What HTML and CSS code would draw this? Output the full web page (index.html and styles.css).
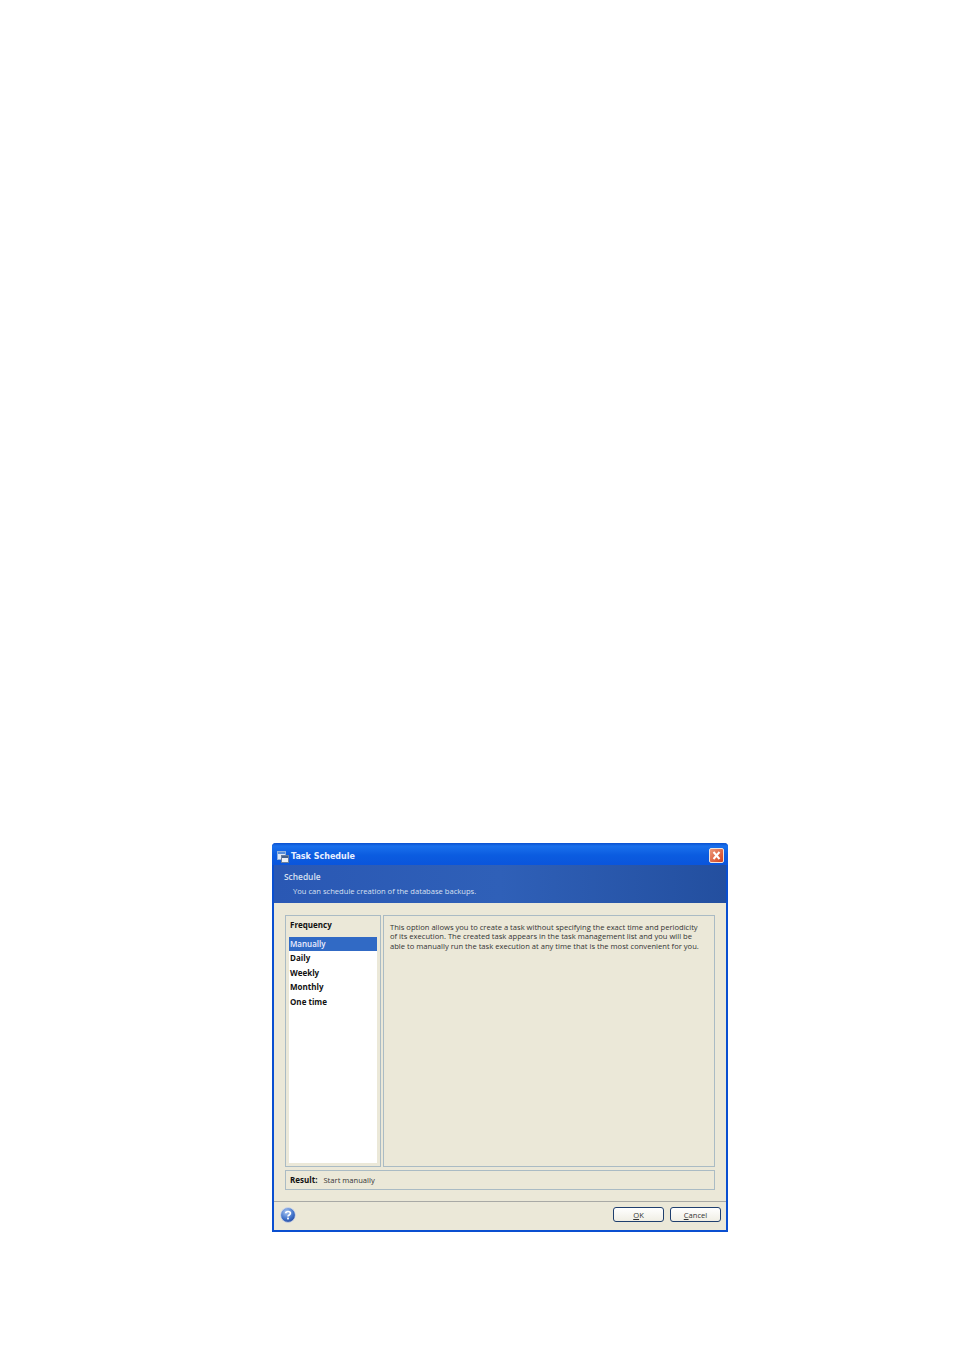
FILE: index.html
```html
<!DOCTYPE html>
<html lang="en">
<head>
    <meta charset="UTF-8">
    <title>Task Schedule</title>
    <link rel="stylesheet" href="styles.css">
</head>
<body>

<div class="window">
    <!-- Title bar -->
    <div class="titlebar">
        <svg class="app-icon" width="12" height="12" viewBox="0 0 12 12">
            <rect x="0.5" y="0.5" width="8" height="8" fill="#dfe9f7" stroke="#8fb0dc"/>
            <rect x="1" y="1" width="7" height="2" fill="#5a8fd8"/>
            <rect x="4.5" y="4.5" width="7" height="7" fill="#eef1f6" stroke="#6b7f9c"/>
            <rect x="5" y="5" width="6" height="2" fill="#44618c"/>
        </svg>
        <span class="title">Task Schedule</span>
        <div class="close">
            <svg width="13" height="13" viewBox="0 0 13 13">
                <path d="M3.5 3 L9.5 10 M9.5 3 L3.5 10" stroke="#fff" stroke-width="2"/>
            </svg>
        </div>
    </div>

    <!-- Blue header -->
    <div class="header">
        <div class="header-title">Schedule</div>
        <div class="header-sub">You can schedule creation of the database backups.</div>
    </div>

    <div class="content">
        <div class="panels">
            <div class="freq-panel">
                <div class="freq-title">Frequency</div>
                <div class="freq-list">
                    <div class="freq-item selected">Manually</div>
                    <div class="freq-item">Daily</div>
                    <div class="freq-item">Weekly</div>
                    <div class="freq-item">Monthly</div>
                    <div class="freq-item">One time</div>
                </div>
            </div>
            <div class="desc-panel">
                <p>This option allows you to create a task without specifying the exact time and periodicity<br>of its execution. The created task appears in the task management list and you will be<br>able to manually run the task execution at any time that is the most convenient for you.</p>
            </div>
        </div>
        <div class="result"><b>Result:</b><span>Start manually</span></div>
    </div>

    <!-- Bottom bar -->
    <div class="footer">
        <svg class="help" width="16" height="16" viewBox="0 0 16 16">
            <defs>
                <radialGradient id="helpFill" cx="0.4" cy="0.3" r="0.8">
                    <stop offset="0" stop-color="#a9c6f2"/>
                    <stop offset="0.6" stop-color="#3f71c9"/>
                    <stop offset="1" stop-color="#1d3f94"/>
                </radialGradient>
            </defs>
            <circle cx="8" cy="8" r="7.4" fill="url(#helpFill)" stroke="#d6dcec" stroke-width="0.8"/>
            <path d="M5.7 6.2 C5.8 3.9 10.4 3.9 10.4 6.3 C10.4 8 8 7.9 8 9.6" fill="none" stroke="#fff" stroke-width="1.7"/>
            <rect x="7.1" y="10.6" width="1.8" height="1.8" fill="#fff"/>
        </svg>
        <div class="buttons">
            <button class="btn"><u>O</u>K</button>
            <button class="btn"><u>C</u>ancel</button>
        </div>
    </div>
</div>

</body>
</html>
```

FILE: styles.css
```css
body {
    margin: 0;
    padding: 843px 0 0 272px;
    background-color: #fff;
    font-family: "Open Sans", "DejaVu Sans", sans-serif;
    font-size: 7.6px;
    color: #333;
}
.window {
    width: 456px;
    height: 389px;
    box-sizing: border-box;
    display: flex;
    flex-direction: column;
    background-color: #ebe8d8;
    border: solid #0a4fd0;
    border-width: 0 2px 2px 2px;
    border-radius: 4px 4px 0 0;
}
.titlebar {
    height: 22px;
    box-sizing: border-box;
    margin: 0 -2px;
    padding: 5px 3px 0 5px;
    display: flex;
    align-items: center;
    border-radius: 4px 4px 0 0;
    background: linear-gradient(to bottom, #0a50d0 0%, #1a70ec 14%, #0b5ce0 55%, #0a55dc 100%);
}
.app-icon {
    margin-right: 2px;
}
.title {
    flex: 1;
    color: #e8f0ff;
    font-size: 8px;
    font-weight: 700;
    font-family: "DejaVu Sans", sans-serif;
}
.close {
    width: 13px;
    height: 13px;
    margin: 0 1px 2px 0;
    border: 1px solid #f3e4dc;
    border-radius: 2px;
    background: linear-gradient(135deg, #ee9a7c, #d2401c);
}
.close svg {
    display: block;
}
.header {
    height: 39px;
    box-sizing: border-box;
    padding: 6px 0 0 10px;
    background: linear-gradient(to right, #2a58b4 0%, #2f60b8 50%, #234f9f 100%);
    color: #d8e0f2;
}
.header-title {
    font-size: 8.4px;
    font-weight: 600;
    line-height: 12px;
}
.header-sub {
    margin: 3px 0 0 9px;
    line-height: 11px;
}
.content {
    flex: 1;
    padding: 12px 11px 0 11px;
}
.panels {
    display: flex;
    gap: 2px;
    height: 252px;
}
.freq-panel {
    flex: none;
    width: 96px;
    box-sizing: border-box;
    border: 1px solid #aabbc4;
    padding: 0 3px 3px 3px;
    display: flex;
    flex-direction: column;
}
.freq-title {
    height: 21px;
    line-height: 18px;
    padding-left: 1px;
    font-size: 8px;
    font-weight: 700;
    color: #111;
}
.freq-list {
    flex: 1;
    background-color: #fff;
}
.freq-item {
    height: 14.5px;
    line-height: 14.5px;
    padding-left: 1px;
    font-size: 8px;
    font-weight: 700;
    color: #111;
}
.freq-item.selected {
    background-color: #316ac5;
    color: #eef;
    font-weight: 600;
}
.desc-panel {
    flex: 1;
    min-width: 0;
    border: 1px solid #aabbc4;
    padding: 7px 6px;
}
.desc-panel p {
    margin: 0;
    line-height: 9.5px;
    white-space: nowrap;
}
.result {
    margin-top: 3px;
    height: 20px;
    box-sizing: border-box;
    border: 1px solid #aabbc4;
    padding-left: 4px;
    line-height: 18px;
}
.result b {
    font-size: 8px;
    color: #111;
    margin-right: 6px;
}
.footer {
    height: 30px;
    margin-top: 11px;
    box-sizing: border-box;
    border-top: 1px solid #a8a9a5;
    padding: 0 5px 2px 6px;
    display: flex;
    align-items: center;
    justify-content: space-between;
}
.buttons {
    display: flex;
    gap: 6px;
}
.btn {
    width: 51px;
    height: 15px;
    padding: 0;
    font: inherit;
    color: #333;
    background: linear-gradient(to bottom, #fff, #f0eee4);
    border: 1px solid #1f3f6e;
    border-radius: 3px;
}
```
